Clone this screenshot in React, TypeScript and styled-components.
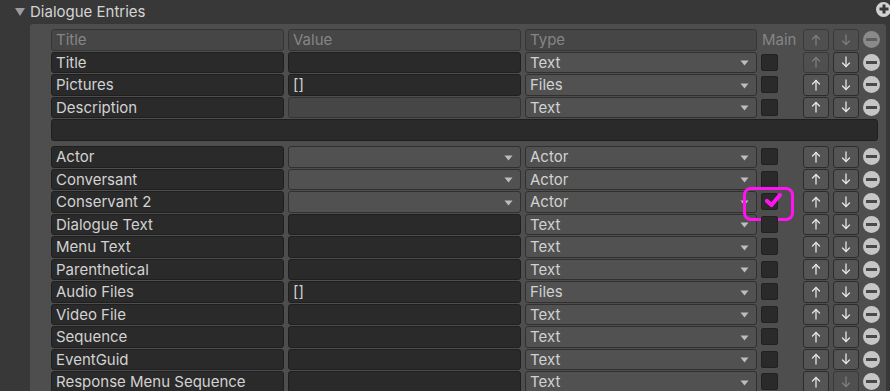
import styled, { createGlobalStyle } from "styled-components";

const GlobalStyle = createGlobalStyle`
  html, body {
    margin: 0;
    padding: 0;
    background: #383838;
    overflow: hidden;
  }
  body {
    font-family: Inter, "Noto Sans", sans-serif;
    color: #d2d2d2;
  }
`;

type ValueKind = "text" | "disabled" | "popup";

interface Entry {
  title: string;
  value?: string;
  kind: ValueKind;
  type: string;
  checked?: boolean;
  upDisabled?: boolean;
  downDisabled?: boolean;
}

const topEntries: Entry[] = [
  { title: "Title", kind: "text", type: "Text", upDisabled: true },
  { title: "Pictures", value: "[]", kind: "text", type: "Files" },
  { title: "Description", kind: "disabled", type: "Text" },
];

const mainEntries: Entry[] = [
  { title: "Actor", kind: "popup", type: "Actor" },
  { title: "Conversant", kind: "popup", type: "Actor" },
  { title: "Conservant 2", kind: "popup", type: "Actor", checked: true },
  { title: "Dialogue Text", kind: "text", type: "Text" },
  { title: "Menu Text", kind: "text", type: "Text" },
  { title: "Parenthetical", kind: "text", type: "Text" },
  { title: "Audio Files", value: "[]", kind: "text", type: "Files" },
  { title: "Video File", kind: "text", type: "Text" },
  { title: "Sequence", kind: "text", type: "Text" },
  { title: "EventGuid", kind: "text", type: "Text" },
  { title: "Response Menu Sequence", kind: "text", type: "Text", downDisabled: true },
];

const Arrow = ({ down }: { down?: boolean }) => (
  <svg width="10" height="12" viewBox="0 0 10 12">
    <g
      transform={down ? "rotate(180 5 6)" : undefined}
      fill="none"
      stroke="currentColor"
      strokeWidth="1.3"
      strokeLinecap="round"
      strokeLinejoin="round"
    >
      <path d="M5 1.5 V11" />
      <path d="M1.5 5 L5 1.5 L8.5 5" />
    </g>
  </svg>
);

const Caret = () => (
  <svg width="9" height="6" viewBox="0 0 9 6">
    <path d="M0.5 0.5 H8.5 L4.5 5.5 Z" fill="#bdbdbd" />
  </svg>
);

const Row = ({ entry }: { entry: Entry }) => (
  <RowGrid>
    <Field>{entry.title}</Field>
    {entry.kind === "popup" ? (
      <Popup>
        <span />
        <Caret />
      </Popup>
    ) : (
      <Field $muted={entry.kind === "disabled"}>{entry.value}</Field>
    )}
    <Popup>
      <span>{entry.type}</span>
      <Caret />
    </Popup>
    <CheckCell>
      <Checkbox>
        {entry.checked && (
          <svg width="19" height="17" viewBox="0 0 19 17">
            <path
              d="M3 9 L7.5 13 L16 3"
              fill="none"
              stroke="#ff14f0"
              strokeWidth="4.2"
              strokeLinecap="round"
              strokeLinejoin="round"
            />
          </svg>
        )}
      </Checkbox>
      {entry.checked && <Highlight />}
    </CheckCell>
    <MoveButton $disabled={entry.upDisabled}>
      <Arrow />
    </MoveButton>
    <MoveButton $disabled={entry.downDisabled}>
      <Arrow down />
    </MoveButton>
    <RemoveButton />
  </RowGrid>
);

const App = () => {
  return (
    <Page>
      <GlobalStyle />
      <Foldout>
        <FoldoutTitle>
          <Triangle />
          Dialogue Entries
        </FoldoutTitle>
        <AddButton />
      </Foldout>
      <ListPanel>
        <RowGrid>
          <Field $header>Title</Field>
          <Field $header>Value</Field>
          <Field $header>Type</Field>
          <MainLabel>Main</MainLabel>
          <MoveButton $disabled>
            <Arrow />
          </MoveButton>
          <MoveButton $disabled>
            <Arrow down />
          </MoveButton>
          <RemoveButton $disabled />
        </RowGrid>
        {topEntries.map((e) => (
          <Row key={e.title} entry={e} />
        ))}
        <Separator />
        {mainEntries.map((e) => (
          <Row key={e.title} entry={e} />
        ))}
      </ListPanel>
    </Page>
  );
};

const Page = styled.div`
  width: 100vw;
  height: 100vh;
  overflow: hidden;
  display: flex;
  flex-direction: column;
`;

const Foldout = styled.div`
  flex: none;
  height: 24px;
  display: flex;
  align-items: center;
  justify-content: space-between;
  padding-left: 15px;
`;

const FoldoutTitle = styled.div`
  display: flex;
  align-items: center;
  gap: 5px;
  font-size: 15px;
  color: #d4d4d4;
  margin-top: -1px;
`;

const Triangle = styled.span`
  width: 0;
  height: 0;
  border-left: 5px solid transparent;
  border-right: 5px solid transparent;
  border-top: 8px solid #9c9c9c;
  margin-top: 1px;
`;

const AddButton = styled.div`
  position: relative;
  flex: none;
  width: 15px;
  height: 15px;
  border-radius: 50%;
  background: #d2d2d2;
  margin-right: -1px;
  margin-top: -6px;

  &::before,
  &::after {
    content: "";
    position: absolute;
    background: #383838;
    left: 50%;
    top: 50%;
    transform: translate(-50%, -50%);
  }
  &::before {
    width: 9px;
    height: 3px;
  }
  &::after {
    width: 3px;
    height: 9px;
  }
`;

const ListPanel = styled.div`
  flex: 1;
  margin-left: 30px;
  width: 856px;
  box-sizing: border-box;
  background: #4e4e4e;
  border-radius: 3px 3px 0 0;
  padding: 5px 6px 0 21px;
  display: flex;
  flex-direction: column;
  gap: 1px;
`;

const RowGrid = styled.div`
  flex: none;
  display: grid;
  grid-template-columns: 233px 233px 232px 38px 26px 26px 17px;
  column-gap: 4px;
  height: 21.5px;
  align-items: center;
`;

const Field = styled.div<{ $header?: boolean; $muted?: boolean }>`
  box-sizing: border-box;
  height: 100%;
  display: flex;
  align-items: center;
  padding: 0 4px;
  font-size: 15px;
  border-radius: 3px;
  white-space: nowrap;
  overflow: hidden;
  background: ${(p) => (p.$header || p.$muted ? "#464646" : "#2a2a2a")};
  border: 1px solid ${(p) => (p.$header || p.$muted ? "#353535" : "#1f1f1f")};
  color: ${(p) => (p.$header ? "#858585" : "#d2d2d2")};
`;

const Popup = styled.div`
  box-sizing: border-box;
  height: 100%;
  display: flex;
  align-items: center;
  justify-content: space-between;
  padding: 0 7px 0 4px;
  font-size: 15px;
  border-radius: 3px;
  background: #515151;
  border: 1px solid #303030;
  color: #d2d2d2;

  svg {
    margin-top: 2px;
  }
`;

const CheckCell = styled.div`
  position: relative;
  height: 100%;
  display: flex;
  align-items: center;
`;

const Checkbox = styled.div`
  position: relative;
  box-sizing: border-box;
  width: 17px;
  height: 17px;
  background: #2a2a2a;
  border: 1px solid #212121;
  border-radius: 2px;

  svg {
    position: absolute;
    left: 2px;
    top: -2px;
  }
`;

const Highlight = styled.div`
  position: absolute;
  left: -18px;
  top: -4px;
  width: 51px;
  height: 34px;
  box-sizing: border-box;
  border: 3px solid #ff14f0;
  border-radius: 8px;
  pointer-events: none;
`;

const MainLabel = styled.div`
  font-size: 15px;
  color: #858585;
  padding-left: 1px;
`;

const MoveButton = styled.div<{ $disabled?: boolean }>`
  box-sizing: border-box;
  height: 100%;
  display: flex;
  align-items: center;
  justify-content: center;
  border-radius: 3px;
  background: ${(p) => (p.$disabled ? "#4f4f4f" : "#545454")};
  border: 1px solid ${(p) => (p.$disabled ? "#3a3a3a" : "#2c2c2c")};
  color: ${(p) => (p.$disabled ? "#7e7e7e" : "#e6e6e6")};
`;

const RemoveButton = styled.div<{ $disabled?: boolean }>`
  position: relative;
  width: 17px;
  height: 17px;
  border-radius: 50%;
  background: ${(p) => (p.$disabled ? "#8a8a8a" : "#c6c6c6")};

  &::after {
    content: "";
    position: absolute;
    left: 3px;
    right: 3px;
    top: 7px;
    height: 3px;
    background: ${(p) => (p.$disabled ? "#5e5e5e" : "#494949")};
  }
`;

const Separator = styled.div`
  flex: none;
  box-sizing: border-box;
  height: 22px;
  width: 827px;
  margin-bottom: 4px;
  background: #2a2a2a;
  border: 1px solid #1f1f1f;
  border-radius: 3px;
`;

export default App;
